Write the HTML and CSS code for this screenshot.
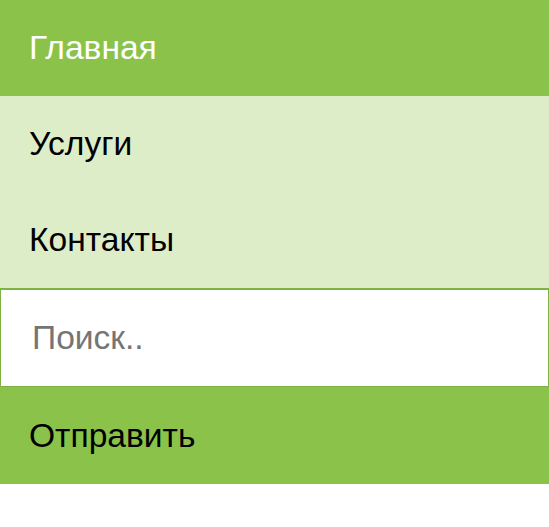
FILE: index.html
```html
<!DOCTYPE html>
<html lang="ru">
<head>
<meta charset="utf-8">
<link rel="stylesheet" href="styles.css">
</head>
<body>
<nav class="menu">
  <a class="item active" href="#">Главная</a>
  <a class="item" href="#">Услуги</a>
  <a class="item" href="#">Контакты</a>
  <input class="search" type="text" placeholder="Поиск..">
  <button class="submit" type="button">Отправить</button>
</nav>
</body>
</html>
```

FILE: styles.css
```css
html, body {
  margin: 0;
  padding: 0;
  background: #fff;
}
.menu {
  display: flex;
  flex-direction: column;
  font-family: "Liberation Sans", Arial, sans-serif;
  font-size: 33.6px;
}
.item {
  display: flex;
  align-items: center;
  height: 96px;
  padding-left: 29px;
  background: #dcedc8;
  color: #000;
  text-decoration: none;
}
.item.active {
  background: #8bc34a;
  color: #fff;
}
.search {
  box-sizing: border-box;
  height: 99px;
  margin: 0;
  padding: 0 0 0 31px;
  border: 1px solid #7cb342;
  border-top-width: 2px;
  font-family: inherit;
  font-size: 33.6px;
  color: #000;
  background: #fff;
  outline: none;
}
.search::placeholder {
  color: #757575;
}
.submit {
  box-sizing: border-box;
  height: 97px;
  margin: 0;
  padding: 0 0 0 29px;
  border: none;
  background: #8bc34a;
  font-family: inherit;
  font-size: 33.6px;
  color: #000;
  text-align: left;
}
```
